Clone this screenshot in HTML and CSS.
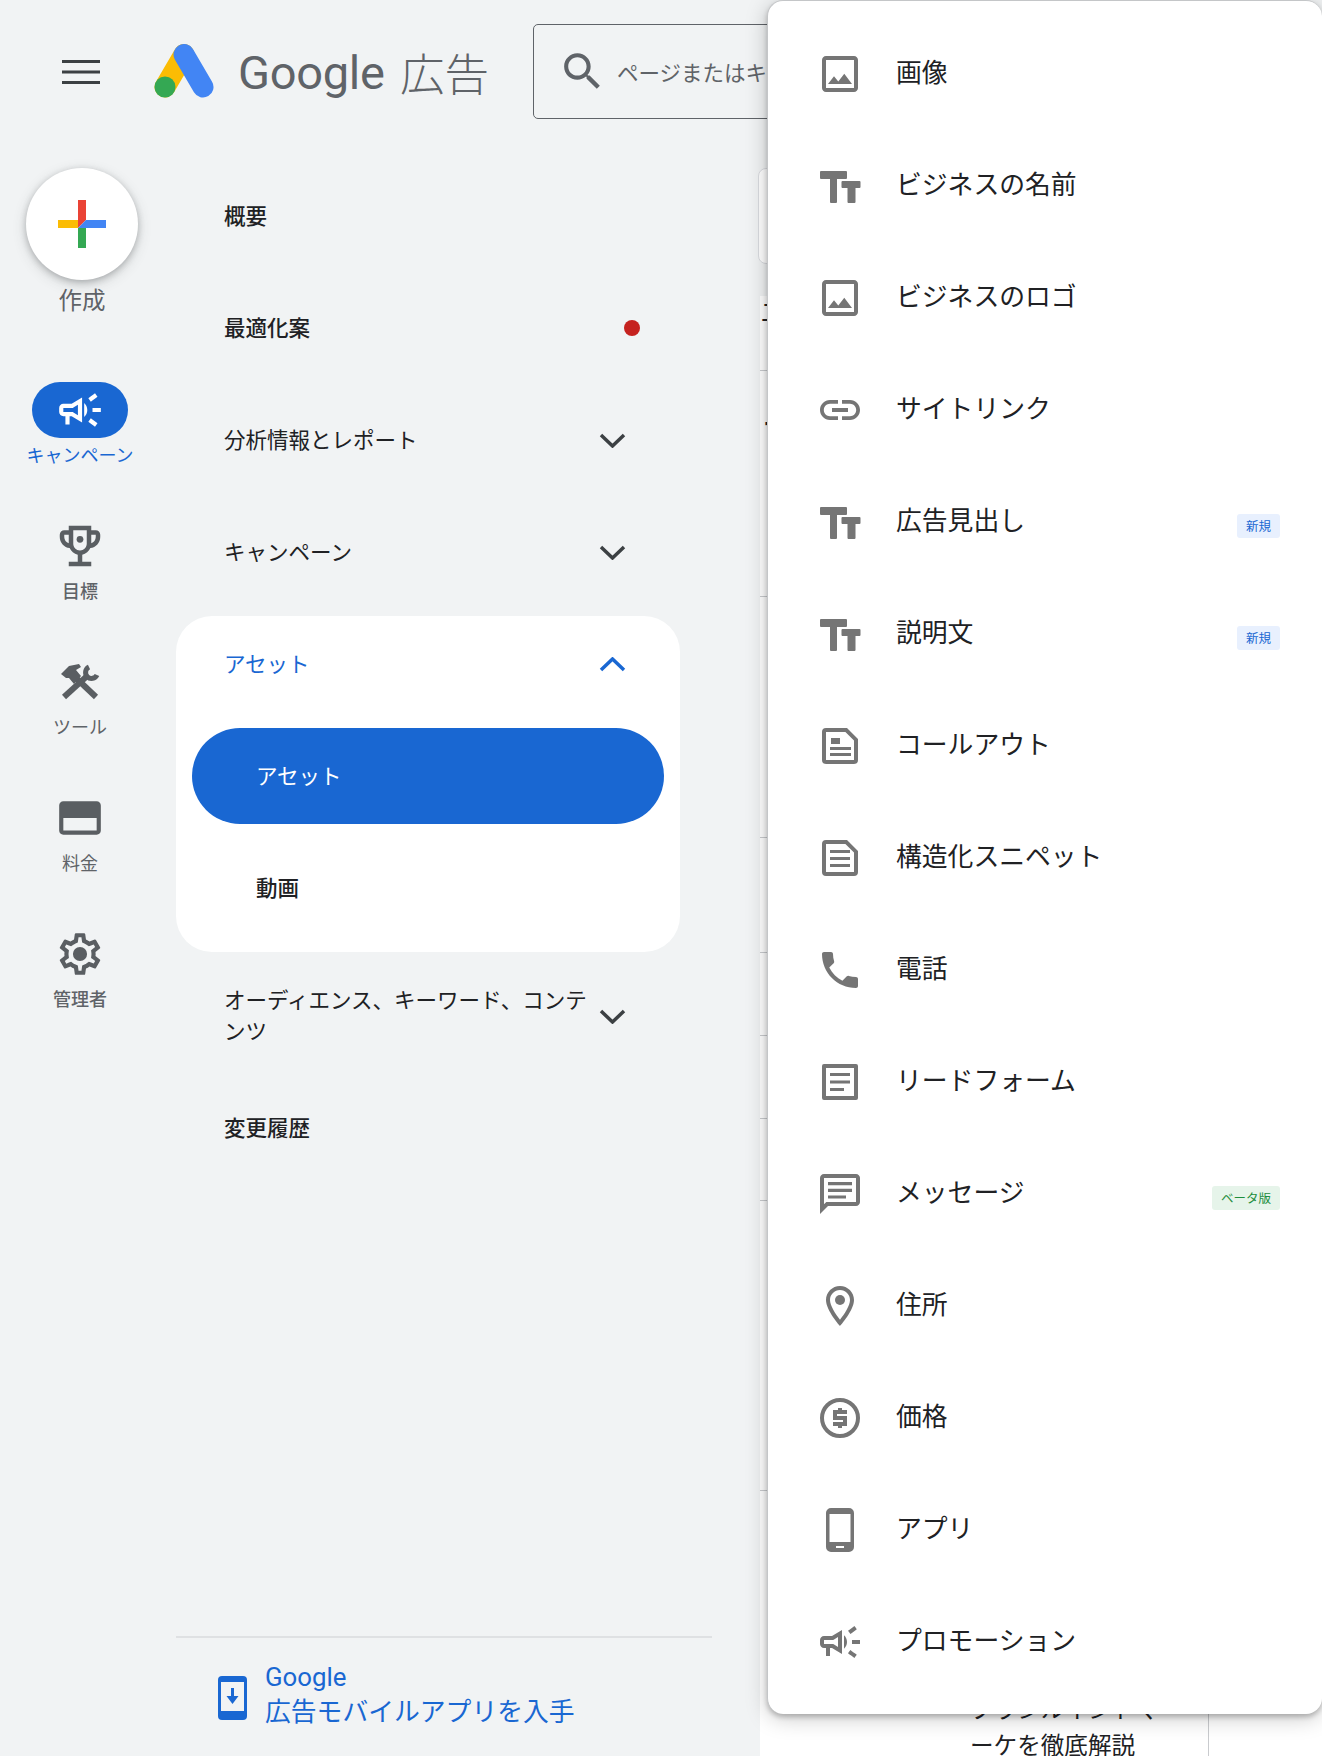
FILE: index.html
```html
<!DOCTYPE html>
<html lang="ja">
<head>
<meta charset="utf-8">
<title>Google 広告</title>
<link rel="stylesheet" href="styles.css">
</head>
<body>
<div class="page">
  <header class="topbar">
    <svg class="burger" viewBox="0 0 38 24"><path d="M0 0h38v3H0zM0 10.500h38v3H0zM0 21h38v3H0z"/></svg>
    <svg class="logo" viewBox="0 0 60 56">
      <path class="logo-y" d="M30 10.500 11 43"/>
      <path class="logo-b" d="M30 10.500 49 43"/>
      <circle class="logo-g" cx="11" cy="43" r="10.500"/>
    </svg>
    <span class="brand">Google</span>
    <span class="brand-ja">広告</span>
    <div class="search">
      <svg class="search-icon" viewBox="0 0 24 24"><path d="M15.500 14h-.79l-.28-.27C15.410 12.590 16 11.110 16 9.500 16 5.910 13.090 3 9.500 3S3 5.910 3 9.500 5.910 16 9.500 16c1.610 0 3.090-.59 4.230-1.570l.27.28v.79l5 4.990L20.490 19l-4.990-5zm-6 0C7.010 14 5 11.990 5 9.500S7.010 5 9.500 5 14 7.010 14 9.500 11.990 14 9.500 14z"/></svg>
      <span class="search-text">ページまたはキャンペーンを検索</span>
    </div>
  </header>

  <div class="body">
    <aside class="sidebar">
      <div class="columns">
        <div class="rail">
          <div class="fab-wrap">
            <div class="fab">
              <svg class="plus" viewBox="0 0 48 48">
                <path fill="#ea4335" d="M20 0h8v20l-8 8z"/>
                <path fill="#fbbc04" d="M0 20h20v8H0z"/>
                <path fill="#4285f4" d="M28 20h20v8H20z"/>
                <path fill="#34a853" d="M20 28h8v20h-8z"/>
              </svg>
            </div>
            <span class="fab-label">作成</span>
          </div>
          <div class="rail-item active">
            <div class="rail-icon"><svg viewBox="0 0 24 24"><path d="M18 11v2h4v-2h-4zm-2 6.610c.96.71 2.210 1.650 3.200 2.390.4-.53.8-1.070 1.200-1.600-.99-.74-2.240-1.680-3.200-2.400-.4.54-.8 1.080-1.200 1.610zM20.400 5.600c-.4-.53-.8-1.070-1.200-1.600-.99.74-2.240 1.680-3.200 2.400.4.53.8 1.070 1.200 1.600.96-.72 2.210-1.650 3.200-2.400zM4 9c-1.100 0-2 .9-2 2v2c0 1.100.9 2 2 2h1v4h2v-4h1l5 3V6L8 9H4zm5.030 1.710L11 9.530v4.940l-1.970-1.180-.48-.29H4v-2h4.550l.48-.29zM15.500 12c0-1.330-.58-2.530-1.500-3.350v6.690c.92-.81 1.500-2.010 1.500-3.340z"/></svg></div>
            <span class="rail-label">キャンペーン</span>
          </div>
          <div class="rail-item">
            <div class="rail-icon"><svg class="trophy" viewBox="0 0 24 24"><path d="M19 5h-2V3H7v2H5c-1.100 0-2 .9-2 2v1c0 2.550 1.920 4.630 4.390 4.940.63 1.500 1.980 2.630 3.610 2.960V19H7v2h10v-2h-4v-3.100c1.630-.33 2.980-1.460 3.610-2.960C19.080 12.630 21 10.550 21 8V7c0-1.100-.9-2-2-2zM5 8V7h2v3.820C5.840 10.400 5 9.300 5 8zm7 6c-1.650 0-3-1.350-3-3V5h6v6c0 1.650-1.350 3-3 3zm7-6c0 1.300-.84 2.400-2 2.820V7h2v1z"/><circle cx="12" cy="9" r="1.500"/></svg></div>
            <span class="rail-label strong">目標</span>
          </div>
          <div class="rail-item">
            <div class="rail-icon"><svg class="tools" viewBox="0 0 40 36">
              <path class="tool-line" d="M16 14l20 19"/>
              <path class="tool-line" d="M26 13 4 33"/>
              <path class="tool-fill" d="M1 10 9 2l10-2 2 3-5 3 5 6-7 8-5-6H6z"/>
              <path class="tool-arc" d="M29 3a6 6 0 1 0 8 8"/>
            </svg></div>
            <span class="rail-label">ツール</span>
          </div>
          <div class="rail-item">
            <div class="rail-icon"><svg viewBox="0 0 24 24"><path d="M20 4H4c-1.110 0-1.990.89-1.990 2L2 18c0 1.110.89 2 2 2h16c1.110 0 2-.89 2-2V6c0-1.110-.89-2-2-2zm0 14H4v-6h16v6z"/></svg></div>
            <span class="rail-label">料金</span>
          </div>
          <div class="rail-item">
            <div class="rail-icon"><svg viewBox="0 0 24 24"><path d="M19.430 12.980c.04-.32.07-.64.07-.98 0-.34-.03-.66-.07-.98l2.110-1.650c.19-.15.24-.42.12-.64l-2-3.460c-.09-.16-.26-.25-.44-.25-.06 0-.12.01-.17.03l-2.490 1c-.52-.4-1.080-.73-1.690-.98l-.38-2.650C14.460 2.180 14.250 2 14 2h-4c-.25 0-.46.18-.49.42l-.38 2.650c-.61.25-1.170.59-1.690.98l-2.490-1c-.06-.02-.12-.03-.18-.03-.17 0-.34.09-.43.25l-2 3.460c-.13.22-.07.49.12.64l2.110 1.650c-.04.32-.07.65-.07.98 0 .33.03.66.07.98l-2.110 1.650c-.19.15-.24.42-.12.64l2 3.460c.09.16.26.25.44.25.06 0 .12-.01.17-.03l2.490-1c.52.4 1.080.73 1.690.98l.38 2.650c.03.24.24.42.49.42h4c.25 0 .46-.18.49-.42l.38-2.650c.61-.25 1.170-.59 1.690-.98l2.490 1c.06.02.12.03.18.03.17 0 .34-.09.43-.25l2-3.460c.12-.22.07-.49-.12-.64l-2.110-1.650zm-1.980-1.710c.04.31.05.52.05.73 0 .21-.02.43-.05.73l-.14 1.130.89.7 1.080.84-.7 1.210-1.270-.51-1.040-.42-.9.68c-.43.32-.84.56-1.250.73l-1.060.43-.16 1.130-.2 1.350h-1.400l-.19-1.350-.16-1.130-1.060-.43c-.43-.18-.83-.41-1.230-.71l-.91-.7-1.060.43-1.270.51-.7-1.210 1.080-.84.89-.7-.14-1.130c-.03-.31-.05-.54-.05-.74s.02-.43.05-.73l.14-1.130-.89-.7-1.080-.84.7-1.210 1.270.51 1.040.42.9-.68c.43-.32.84-.56 1.250-.73l1.060-.43.16-1.130.2-1.350h1.390l.19 1.350.16 1.130 1.060.43c.43.18.83.41 1.230.71l.91.7 1.060-.43 1.270-.51.7 1.210-1.070.85-.89.7.14 1.130z"/><circle cx="12" cy="12" r="3.400"/></svg></div>
            <span class="rail-label strong">管理者</span>
          </div>
        </div>

        <nav class="nav">
          <div class="nav-row"><span class="nav-text strong">概要</span></div>
          <div class="nav-row"><span class="nav-text strong">最適化案</span><span class="dot"></span></div>
          <div class="nav-row"><span class="nav-text">分析情報とレポート</span><svg class="chev" viewBox="0 0 27 15"><path d="M2 2l11.500 11L25 2"/></svg></div>
          <div class="nav-row"><span class="nav-text">キャンペーン</span><svg class="chev" viewBox="0 0 27 15"><path d="M2 2l11.500 11L25 2"/></svg></div>
          <div class="panel">
            <div class="panel-head"><span class="nav-text">アセット</span><svg class="chev" viewBox="0 0 27 15"><path d="M2 13 13.500 2 25 13"/></svg></div>
            <div class="pill"><span class="nav-text">アセット</span></div>
            <div class="sub-row"><span class="nav-text strong">動画</span></div>
          </div>
          <div class="nav-row"><span class="nav-text">オーディエンス、キーワード、コンテンツ</span><svg class="chev" viewBox="0 0 27 15"><path d="M2 2l11.500 11L25 2"/></svg></div>
          <div class="nav-row"><span class="nav-text strong">変更履歴</span></div>
          <div class="promo">
            <svg class="promo-icon" viewBox="0 0 29 44">
              <rect class="promo-body" width="29" height="44" rx="4"/>
              <rect class="promo-screen" x="3" y="6" width="23" height="29"/>
              <path class="promo-body" d="M13 12h3v8h4.500l-6 8-6-8H13zM10 38.500h9v1.800h-9z"/>
            </svg>
            <div class="promo-text">Google<br>広告モバイルアプリを入手</div>
          </div>
        </nav>
      </div>
    </aside>

    <main class="main">
      <div class="card"></div>
      <div class="table">
        <div class="tr"><span class="peek peek-a">二</span></div>
        <div class="tr"><span class="peek peek-b">ア</span></div>
        <div class="tr"></div>
        <div class="tr"></div>
        <div class="tr"></div>
        <div class="tr"></div>
        <div class="tr"></div>
        <div class="tr"></div>
        <div class="tr tr-last"><div class="cell">ブランルイントマ<br>ーケを徹底解説</div></div>
      </div>
    </main>
  </div>

  <div class="menu">
    <div class="menu-item"><svg class="mi" viewBox="0 0 24 24"><path d="M19 5v14H5V5h14m0-2H5c-1.100 0-2 .9-2 2v14c0 1.100.9 2 2 2h14c1.100 0 2-.9 2-2V5c0-1.100-.9-2-2-2zm-4.860 8.860l-3 3.870L9 13.140 6 17h12l-3.860-5.140z"/></svg><span class="mt">画像</span></div>
    <div class="menu-item"><svg class="mi" viewBox="0 0 48 48"><path d="M5 9h25a1 1 0 0 1 1 1v6a1 1 0 0 1-1 1h-9v23a1 1 0 0 1-1 1h-5a1 1 0 0 1-1-1V17H5a1 1 0 0 1-1-1v-6a1 1 0 0 1 1-1zM26.500 19h17a1 1 0 0 1 1 1v5a1 1 0 0 1-1 1h-4v14a1 1 0 0 1-1 1h-6a1 1 0 0 1-1-1V26h-5a1 1 0 0 1-1-1v-5a1 1 0 0 1 1-1z"/></svg><span class="mt">ビジネスの名前</span></div>
    <div class="menu-item"><svg class="mi" viewBox="0 0 24 24"><path d="M19 5v14H5V5h14m0-2H5c-1.100 0-2 .9-2 2v14c0 1.100.9 2 2 2h14c1.100 0 2-.9 2-2V5c0-1.100-.9-2-2-2zm-4.860 8.860l-3 3.870L9 13.140 6 17h12l-3.860-5.140z"/></svg><span class="mt">ビジネスのロゴ</span></div>
    <div class="menu-item"><svg class="mi" viewBox="0 0 24 24"><path d="M3.900 12c0-1.710 1.390-3.100 3.100-3.100h4V7H7c-2.760 0-5 2.240-5 5s2.240 5 5 5h4v-1.900H7c-1.710 0-3.100-1.390-3.100-3.100zM8 13h8v-2H8v2zm9-6h-4v1.900h4c1.710 0 3.100 1.390 3.100 3.100s-1.390 3.100-3.100 3.100h-4V17h4c2.760 0 5-2.240 5-5s-2.240-5-5-5z"/></svg><span class="mt">サイトリンク</span></div>
    <div class="menu-item"><svg class="mi" viewBox="0 0 48 48"><path d="M5 9h25a1 1 0 0 1 1 1v6a1 1 0 0 1-1 1h-9v23a1 1 0 0 1-1 1h-5a1 1 0 0 1-1-1V17H5a1 1 0 0 1-1-1v-6a1 1 0 0 1 1-1zM26.500 19h17a1 1 0 0 1 1 1v5a1 1 0 0 1-1 1h-4v14a1 1 0 0 1-1 1h-6a1 1 0 0 1-1-1V26h-5a1 1 0 0 1-1-1v-5a1 1 0 0 1 1-1z"/></svg><span class="mt">広告見出し</span><em class="badge">新規</em></div>
    <div class="menu-item"><svg class="mi" viewBox="0 0 48 48"><path d="M5 9h25a1 1 0 0 1 1 1v6a1 1 0 0 1-1 1h-9v23a1 1 0 0 1-1 1h-5a1 1 0 0 1-1-1V17H5a1 1 0 0 1-1-1v-6a1 1 0 0 1 1-1zM26.500 19h17a1 1 0 0 1 1 1v5a1 1 0 0 1-1 1h-4v14a1 1 0 0 1-1 1h-6a1 1 0 0 1-1-1V26h-5a1 1 0 0 1-1-1v-5a1 1 0 0 1 1-1z"/></svg><span class="mt">説明文</span><em class="badge">新規</em></div>
    <div class="menu-item"><svg class="mi" viewBox="0 0 24 24"><path fill-rule="evenodd" d="M5 3h10.500L21 8.500V19a2 2 0 0 1-2 2H5a2 2 0 0 1-2-2V5a2 2 0 0 1 2-2zm0 2v14h14V9.300L14.700 5z"/><path d="M7.500 8H12v3H7.500zM7 12.500h10.500V14H7zM7 15.500h10.500V17H7z"/></svg><span class="mt">コールアウト</span></div>
    <div class="menu-item"><svg class="mi" viewBox="0 0 24 24"><path fill-rule="evenodd" d="M5 3h10.500L21 8.500V19a2 2 0 0 1-2 2H5a2 2 0 0 1-2-2V5a2 2 0 0 1 2-2zm0 2v14h14V9.300L14.700 5z"/><path d="M7 8h10v1.500H7zM7 11.500h10V13H7zM7 15h10v1.500H7z"/></svg><span class="mt">構造化スニペット</span></div>
    <div class="menu-item"><svg class="mi" viewBox="0 0 24 24"><path d="M6.620 10.790c1.440 2.830 3.760 5.140 6.590 6.590l2.200-2.200c.27-.27.67-.36 1.020-.24 1.120.37 2.330.57 3.570.57.55 0 1 .45 1 1V20c0 .55-.45 1-1 1-9.390 0-17-7.610-17-17 0-.55.45-1 1-1h3.500c.55 0 1 .45 1 1 0 1.250.2 2.450.57 3.570.11.35.03.74-.25 1.020l-2.200 2.200z"/></svg><span class="mt">電話</span></div>
    <div class="menu-item"><svg class="mi" viewBox="0 0 24 24"><path fill-rule="evenodd" d="M4 3h16a1 1 0 0 1 1 1v16a1 1 0 0 1-1 1H4a1 1 0 0 1-1-1V4a1 1 0 0 1 1-1zm1 2v14h14V5z"/><path d="M7 7.500h10V9H7zM7 11.200h10v1.500H7zM7 15h7v1.500H7z"/></svg><span class="mt">リードフォーム</span></div>
    <div class="menu-item"><svg class="mi" viewBox="0 0 24 24"><path d="M20 2H4c-1.100 0-2 .9-2 2v18l4-4h14c1.100 0 2-.9 2-2V4c0-1.100-.9-2-2-2zm0 14H5.170L4 17.170V4h16v12z"/><path d="M6 6h12v1.600H6zM6 9.400h12V11H6zM6 12.800h9v1.500H6z"/></svg><span class="mt">メッセージ</span><em class="badge badge-beta">ベータ版</em></div>
    <div class="menu-item"><svg class="mi" viewBox="0 0 24 24"><path d="M12 2C8.130 2 5 5.130 5 9c0 5.250 7 13 7 13s7-7.750 7-13c0-3.870-3.130-7-7-7zM7 9c0-2.760 2.240-5 5-5s5 2.240 5 5c0 2.880-2.880 7.190-5 9.880C9.920 16.210 7 11.850 7 9z"/><circle cx="12" cy="9" r="2.500"/></svg><span class="mt">住所</span></div>
    <div class="menu-item"><svg class="mi" viewBox="0 0 24 24"><circle class="mi-stroke" cx="12" cy="12" r="9"/><path class="mi-stroke" d="M15.500 9h-6v3h5v3h-6M12 7v2M12 15v2"/></svg><span class="mt">価格</span></div>
    <div class="menu-item"><svg class="mi" viewBox="0 0 24 24"><path d="M16.500 1h-9A2.500 2.500 0 0 0 5 3.500v17A2.500 2.500 0 0 0 7.500 23h9a2.500 2.500 0 0 0 2.500-2.500v-17A2.500 2.500 0 0 0 16.500 1zM14 21h-4v-1h4v1zm3.250-3H6.750V4h10.500v14z"/></svg><span class="mt">アプリ</span></div>
    <div class="menu-item"><svg class="mi" viewBox="0 0 24 24"><path d="M18 11v2h4v-2h-4zm-2 6.610c.96.71 2.210 1.650 3.200 2.390.4-.53.8-1.070 1.200-1.600-.99-.74-2.240-1.680-3.200-2.400-.4.54-.8 1.080-1.200 1.610zM20.400 5.600c-.4-.53-.8-1.070-1.200-1.600-.99.74-2.240 1.680-3.200 2.400.4.53.8 1.070 1.200 1.600.96-.72 2.210-1.650 3.200-2.400zM4 9c-1.100 0-2 .9-2 2v2c0 1.100.9 2 2 2h1v4h2v-4h1l5 3V6L8 9H4zm5.030 1.710L11 9.530v4.940l-1.970-1.180-.48-.29H4v-2h4.550l.48-.29zM15.500 12c0-1.330-.58-2.530-1.500-3.350v6.690c.92-.81 1.500-2.010 1.500-3.340z"/></svg><span class="mt">プロモーション</span></div>
  </div>
</div>
</body>
</html>
```

FILE: styles.css
```css
* { box-sizing: border-box; }
html, body { margin: 0; padding: 0; }
body {
  background: #f1f3f4;
  color: #202124;
  font-family: "Noto Sans CJK JP", "Noto Sans", sans-serif;
}
.page {
  position: relative;
  width: 1322px;
  height: 1756px;
  overflow: hidden;
  display: flex;
  flex-direction: column;
}
.strong { font-weight: 500; }

/* top bar */
.topbar {
  height: 143px;
  margin-bottom: 25px;
  padding-left: 62px;
  display: flex;
  align-items: center;
  flex: none;
}
.burger { width: 38px; height: 24px; fill: #3c4043; flex: none; }
.logo { width: 60px; height: 56px; margin-left: 54px; flex: none; }
.logo-y, .logo-b { fill: none; stroke-width: 21px; stroke-linecap: round; }
.logo-y { stroke: #fbbc04; }
.logo-b { stroke: #4285f4; }
.logo-g { fill: #34a853; }
.brand {
  margin-left: 24px;
  padding-top: 2px;
  font-family: Roboto, sans-serif;
  font-size: 47px;
  letter-spacing: -.3px;
  color: #5f6368;
  width: 162px;
  flex: none;
}
.brand-ja {
  font-size: 44.500px;
  font-weight: 300;
  color: #5f6368;
  width: 133px;
  flex: none;
}
.search {
  width: 600px;
  height: 95px;
  flex: none;
  border: 1.5px solid #5f6368;
  border-radius: 5px;
  display: flex;
  align-items: center;
  padding-left: 24px;
}
.search-icon { width: 49px; height: 49px; fill: #5f6368; flex: none; }
.search-text {
  margin-left: 10px;
  font-size: 21.500px;
  color: #5f6368;
  white-space: nowrap;
}

/* body */
.body { flex: 1; display: flex; min-height: 0; }
.sidebar { width: 758px; flex: none; }
.columns { display: flex; height: 100%; }

.rail { width: 160px; flex: none; display: flex; flex-direction: column; align-items: center; }
.fab-wrap { height: 214px; width: 100%; flex: none; display: flex; flex-direction: column; align-items: center; padding-left: 4px; }
.fab {
  width: 112px;
  height: 112px;
  border-radius: 50%;
  background: #fff;
  box-shadow: 0 2px 6px rgba(60, 64, 67, .3), 0 4px 14px rgba(60, 64, 67, .18);
  display: flex;
  align-items: center;
  justify-content: center;
}
.plus { width: 48px; height: 48px; }
.fab-label { margin-top: 4px; font-size: 23.500px; line-height: 30px; color: #5f6368; }
.rail-item { height: 136px; width: 100%; flex: none; display: flex; flex-direction: column; align-items: center; color: #5f6368; }
.rail-icon { width: 96px; height: 56px; border-radius: 28px; display: flex; align-items: center; justify-content: center; }
.rail-icon svg { width: 50px; height: 50px; fill: #5a5e62; }
.rail-icon .trophy { width: 54px; height: 54px; }
.rail-icon .tools { width: 40px; height: 36px; }
.tool-line { fill: none; stroke: #5a5e62; stroke-width: 6px; }
.rail-icon .tools .tool-fill { fill: #5a5e62; }
.rail-icon .tools .tool-line, .rail-icon .tools .tool-arc { fill: none; }
.tool-arc { stroke: #5a5e62; stroke-width: 5px; }
.rail-label { margin-top: 4px; font-size: 18px; line-height: 24px; white-space: nowrap; }
.rail-item.active { color: #1967d2; }
.rail-item.active .rail-icon { background: #1967d2; }
.rail-item.active .rail-icon svg { fill: #fff; }

/* nav */
.nav { width: 536px; margin-left: 16px; flex: none; display: flex; flex-direction: column; gap: 16px; font-size: 21.500px; line-height: 31px; }
.nav-row, .panel-head {
  width: 504px;
  height: 96px;
  flex: none;
  padding: 0 54px 0 48px;
  display: flex;
  align-items: center;
}
.nav-text { flex: 1; min-width: 0; margin-bottom: 4px; }
.chev { width: 27px; height: 15px; flex: none; fill: none; stroke: #3c4043; stroke-width: 3.500px; }
.dot { width: 16px; height: 16px; border-radius: 50%; background: #c5221f; margin-right: -14px; flex: none; }
.panel {
  width: 504px;
  background: #fff;
  border-radius: 36px;
  padding: 0 16px 16px;
  display: flex;
  flex-direction: column;
  gap: 16px;
  flex: none;
}
.panel-head { width: auto; padding: 0 38px 0 32px; color: #1967d2; }
.panel-head .chev { stroke: #1967d2; }
.pill {
  height: 96px;
  border-radius: 48px;
  background: #1967d2;
  color: #fff;
  padding-left: 64px;
  display: flex;
  align-items: center;
}
.sub-row { height: 96px; padding-left: 64px; display: flex; align-items: center; }

.promo {
  margin-top: auto;
  height: 120px;
  flex: none;
  border-top: 2px solid #dfe1e3;
  padding: 22px 0 0 42px;
  display: flex;
  gap: 18px;
}
.promo-icon { width: 29px; height: 44px; margin-top: 16px; flex: none; }
.promo-body { fill: #1967d2; }
.promo-screen { fill: #f1f3f4; }
.promo-text { font-family: Roboto, "Noto Sans CJK JP", sans-serif; font-size: 25.800px; line-height: 35px; color: #1967d2; }

/* main behind the menu */
.main { flex: 1; min-width: 0; }
.card { height: 96px; margin-bottom: 32px; background: #fff; border: 1px solid #dadce0; border-radius: 8px; }
.table {
  margin-left: 2px;
  height: 1460px;
  background: #fff;
  display: grid;
  grid-template-rows: 75px 226px 241px 115px 83px 83px 82px 290px 1fr;
}
.tr { border-bottom: 1px solid #c9cbce; padding-left: 1px; overflow: hidden; }
.tr-last { border-bottom: 0; padding-left: 210px; }
.peek { display: block; color: #202124; }
.peek-a { font-size: 24px; line-height: 30px; }
.peek-b { font-size: 36px; line-height: 46px; margin-top: 39px; }
.cell {
  width: 239px;
  height: 100%;
  padding-top: 199px;
  border-right: 1px solid #c9cbce;
  font-size: 23.600px;
  line-height: 36px;
  color: #202124;
  white-space: nowrap;
}

/* popup menu */
.menu {
  position: absolute;
  left: 767px;
  top: 0;
  width: 555px;
  height: 1714px;
  padding: 17px 0;
  background: #fff;
  border-radius: 16px;
  border: 1px solid #c4c6c8;
  border-width: 1px 0 0 1px;
  box-shadow: 0 3px 5px rgba(0, 0, 0, .22), 0 4px 22px rgba(0, 0, 0, .22);
}
.menu-item {
  height: 112px;
  display: flex;
  align-items: center;
  padding: 0 42px 0 48px;
  font-size: 25.800px;
  color: #202124;
}
.mt { margin-bottom: 7px; }
.mi { width: 48px; height: 48px; fill: #757575; margin-right: 32px; flex: none; }
.mi-stroke { fill: none; stroke: #757575; stroke-width: 2px; }
.badge {
  margin-left: auto;
  margin-top: 8px;
  height: 24px;
  padding: 0 9px;
  border-radius: 3px;
  background: #e8f0fe;
  color: #1967d2;
  font-size: 12.500px;
  font-style: normal;
  line-height: 24px;
}
.badge-beta { background: #e6f4ea; color: #1e8e3e; }
```
